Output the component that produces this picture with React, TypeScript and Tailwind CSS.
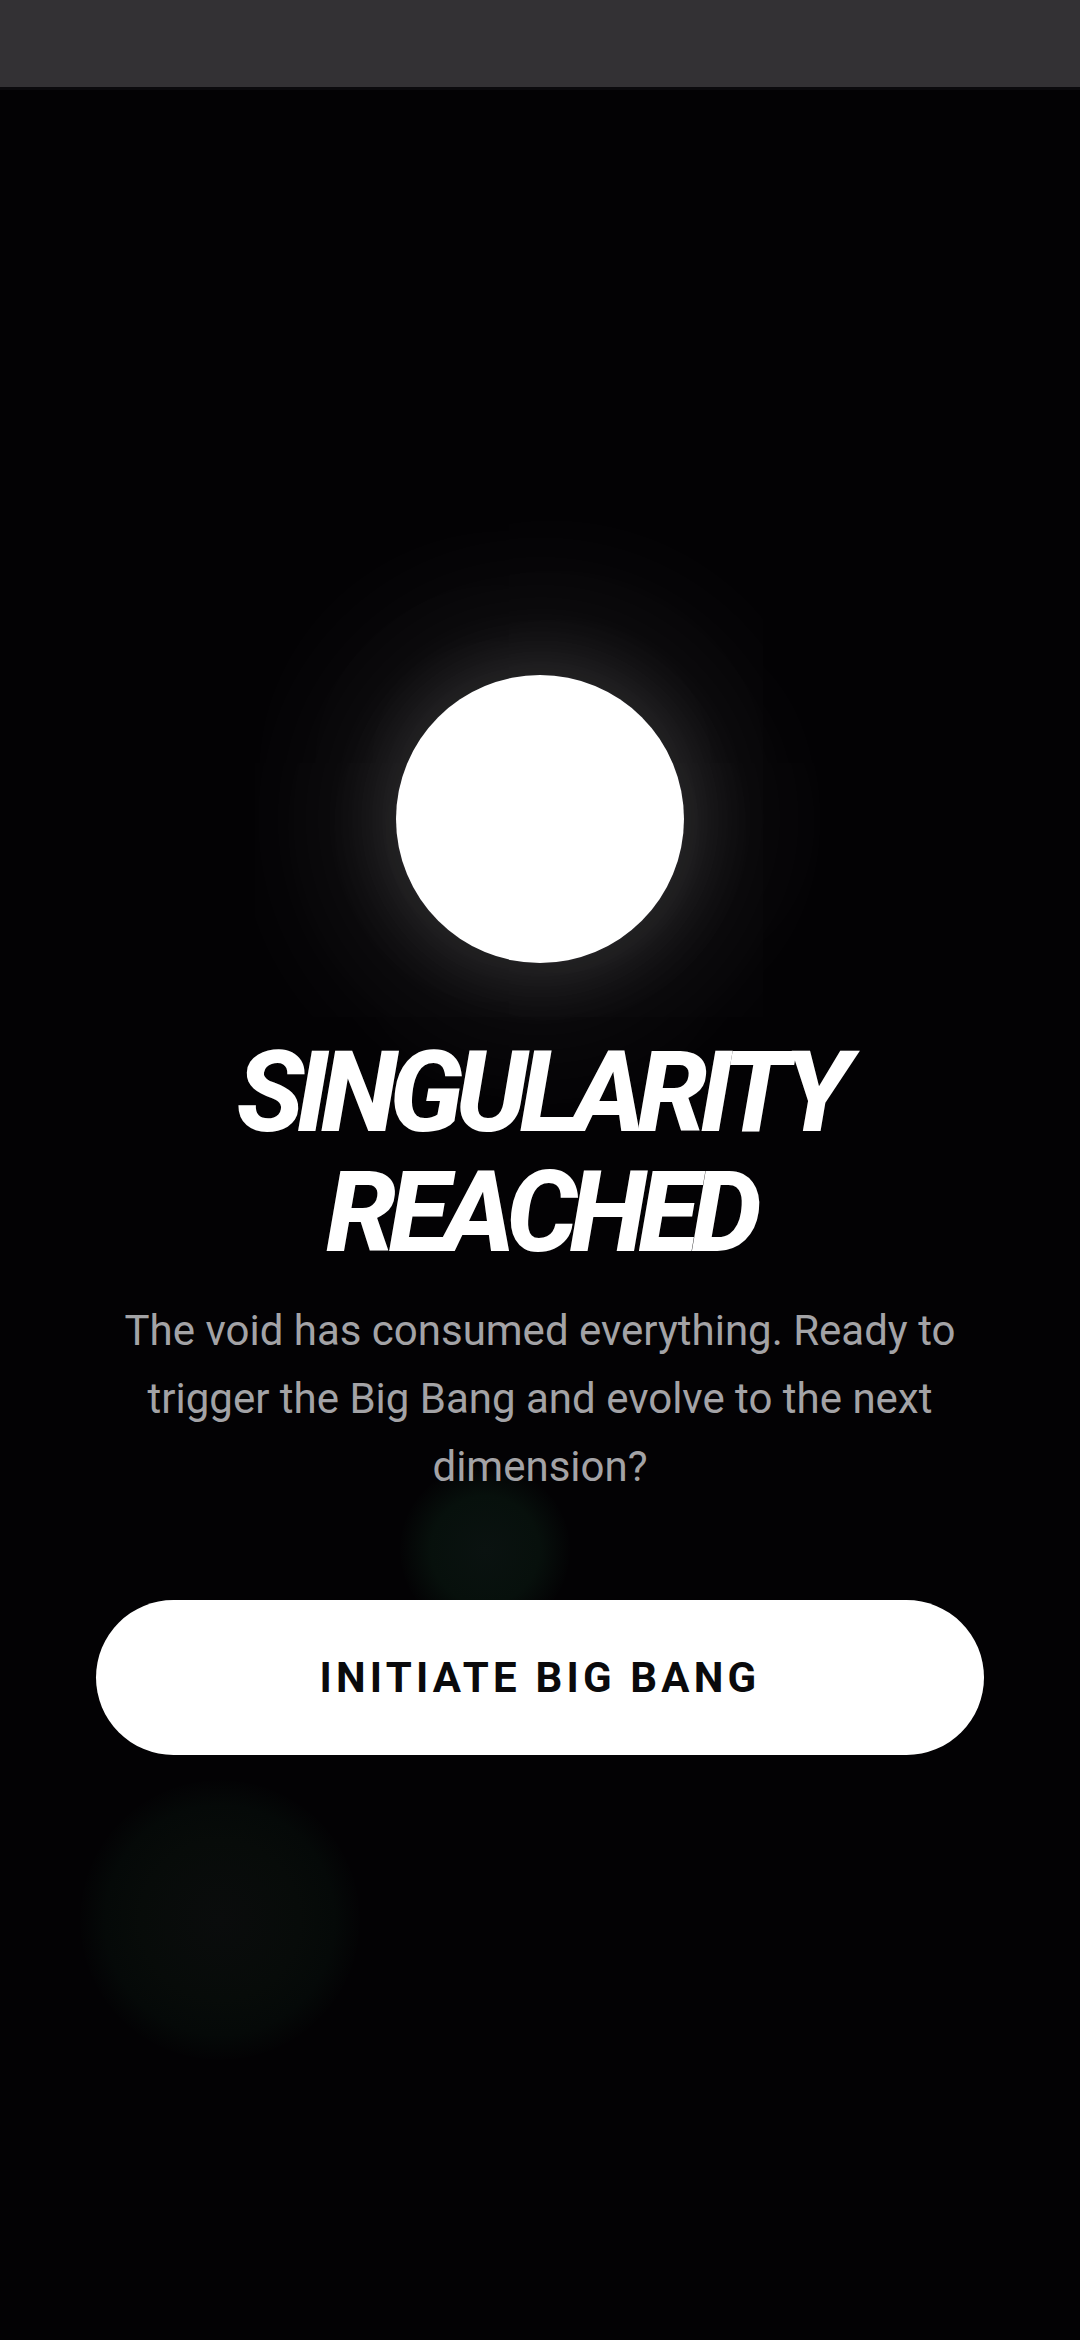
const font = { fontFamily: 'Roboto, "Noto Sans", "Liberation Sans", sans-serif' };

function Glow({ className }: { className: string }) {
  return <div className={`pointer-events-none absolute rounded-full ${className}`} />;
}

export default function App() {
  return (
    <div className="relative flex min-h-[2340px] w-[1080px] flex-col overflow-hidden bg-[#030204]" style={font}>
      {/* status bar */}
      <div className="h-[90px] w-full shrink-0 border-b-[3px] border-[#0b0a0d] bg-[#333134]" />

      {/* faint nebula blobs */}
      <Glow className="left-[400px] top-[1465px] h-[170px] w-[170px] bg-[radial-gradient(circle,#0a1210_0%,#07100c_45%,transparent_72%)]" />
      <Glow className="left-[80px] top-[1780px] h-[280px] w-[280px] bg-[radial-gradient(circle,#0a0c0c_0%,#070b09_40%,#050908_58%,transparent_72%)]" />

      <main className="relative flex flex-1 flex-col items-center justify-center px-[96px]">
        <div className="h-[288px] w-[288px] rounded-full bg-white shadow-[0_0_70px_14px_rgba(255,255,255,0.11),0_0_160px_50px_rgba(255,255,255,0.08),0_0_260px_100px_rgba(255,255,255,0.03)]" />

        <h1 className="mt-[70px] text-center text-[112px] font-extrabold italic leading-[120px] tracking-[-0.07em] text-white">
          SINGULARITY
          <br />
          REACHED
        </h1>

        <p className="mt-[24px] max-w-[888px] text-center text-[42px] leading-[68px] text-[#a3a3a6]">
          The void has consumed everything. Ready to trigger the Big Bang and evolve to the next dimension?
        </p>

        <button className="mt-[99px] flex h-[155px] w-full items-center justify-center rounded-full bg-white text-[42px] font-bold tracking-[0.1em] text-[#0a0a0c]">
          INITIATE BIG BANG
        </button>
      </main>
    </div>
  );
}
